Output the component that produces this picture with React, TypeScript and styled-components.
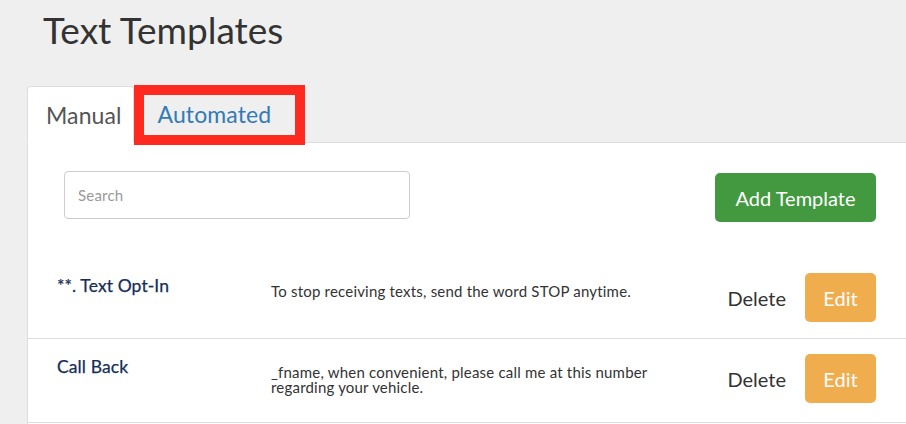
import React from "react";
import styled, { createGlobalStyle } from "styled-components";

const GlobalStyle = createGlobalStyle`
  html, body {
    margin: 0;
    padding: 0;
    background: #efefef;
    font-family: Lato, "Open Sans", sans-serif;
    color: #333;
    overflow: hidden;
  }
  * { box-sizing: border-box; }
`;

const Page = styled.div`
  padding-left: 27px;
  width: 906px;
  height: 424px;
  display: flex;
  flex-direction: column;
`;

const Title = styled.h1`
  margin: 0;
  padding: 10px 0 0 16px;
  height: 86px;
  font-size: 37px;
  font-weight: 400;
  line-height: 1.1;
  color: #333;
`;

const TabList = styled.div`
  display: flex;
  height: 57px;
  border-bottom: 1px solid #ddd;
`;

const Tab = styled.div<{ $active?: boolean; $marked?: boolean }>`
  position: relative;
  display: flex;
  align-items: center;
  height: ${(p) => (p.$active ? "57px" : "56px")};
  font-size: 23px;
  letter-spacing: 0.1px;
  padding: ${(p) => (p.$active ? "0 11px 0 18px" : "0 0 0 24px")};
  width: ${(p) => (p.$marked ? "171px" : "auto")};
  color: ${(p) => (p.$active ? "#555" : "#337ab7")};
  background: ${(p) => (p.$active ? "#fff" : "transparent")};
  border: ${(p) => (p.$active ? "1px solid #ddd" : "none")};
  border-bottom-color: transparent;
  border-radius: 4px 4px 0 0;
  ${(p) =>
    p.$marked &&
    `
    &::after {
      content: "";
      position: absolute;
      left: 0;
      right: 0;
      top: -1px;
      bottom: -3px;
      border: 10px solid #ff2a1f;
    }
  `}
`;

const Panel = styled.div`
  flex: 1;
  background: #fff;
  border-left: 1px solid #ddd;
`;

const Toolbar = styled.div`
  display: flex;
  justify-content: space-between;
  align-items: flex-start;
  padding: 28px 30px 36px 36px;
`;

const SearchInput = styled.input`
  width: 346px;
  height: 48px;
  border: 1px solid #ccc;
  border-radius: 4px;
  padding: 0 13px;
  font-family: Lato, sans-serif;
  font-size: 15px;
  letter-spacing: 0.2px;
  color: #555;
  outline: none;
  &::placeholder { color: #999; }
`;

const Button = styled.button<{ $variant: "success" | "warning" }>`
  border: none;
  border-radius: 5px;
  color: #fff;
  font-family: Lato, sans-serif;
  font-size: 20px;
  height: 49px;
  padding: 0;
  width: ${(p) => (p.$variant === "success" ? "161px" : "71px")};
  background: ${(p) => (p.$variant === "success" ? "#43993f" : "#f0ad4e")};
  margin-top: ${(p) => (p.$variant === "success" ? "2px" : "0")};
  cursor: pointer;
`;

const Row = styled.div`
  display: grid;
  grid-template-columns: 214px 410px 1fr;
  align-items: start;
  padding: 15px 30px 16px 29px;
  border-bottom: 1px solid #ddd;
`;

const Name = styled.div`
  margin-top: 2px;
  font-size: 17.5px;
  font-weight: 400;
  letter-spacing: 0.1px;
  color: #142f58;
  -webkit-text-stroke: 0.25px #142f58;
`;

const Desc = styled.div`
  margin-top: 11px;
  padding-bottom: 11px;
  font-size: 15px;
  letter-spacing: 0.2px;
  line-height: 15px;
  color: #333;
`;

const Actions = styled.div`
  display: flex;
  justify-content: flex-end;
  align-items: center;
  gap: 19px;
`;

const DeleteLink = styled.span`
  font-size: 20px;
  color: #333;
`;

const templates = [
  { name: "**. Text Opt-In", text: "To stop receiving texts, send the word STOP anytime." },
  {
    name: "Call Back",
    text: "_fname, when convenient, please call me at this number regarding your vehicle.",
  },
];

export default function App() {
  return (
    <>
      <GlobalStyle />
      <Page>
        <Title>Text Templates</Title>
        <TabList>
          <Tab $active>Manual</Tab>
          <Tab $marked>Automated</Tab>
        </TabList>
        <Panel>
          <Toolbar>
            <SearchInput placeholder="Search" />
            <Button $variant="success">Add Template</Button>
          </Toolbar>
          {templates.map((t) => (
            <Row key={t.name}>
              <Name>{t.name}</Name>
              <Desc>{t.text}</Desc>
              <Actions>
                <DeleteLink>Delete</DeleteLink>
                <Button $variant="warning">Edit</Button>
              </Actions>
            </Row>
          ))}
        </Panel>
      </Page>
    </>
  );
}
